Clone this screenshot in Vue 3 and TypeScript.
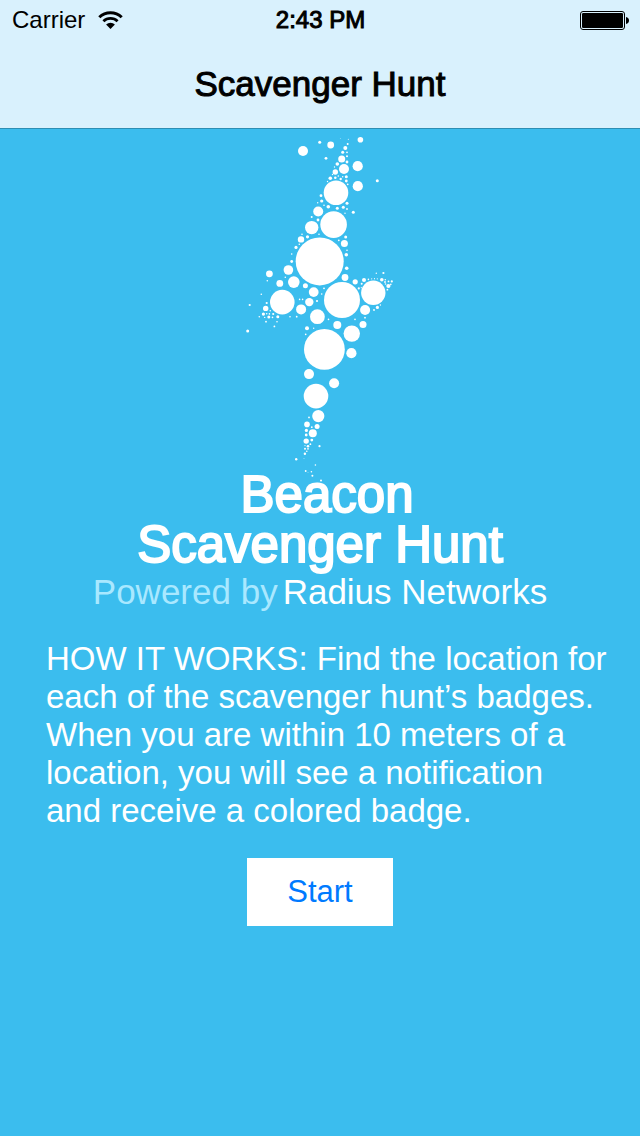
<script setup lang="ts">
type Dot = [x: number, y: number, r: number]

const dots: Dot[] = [
  // tip
  [303, 151, 5], [319.7, 142.3, 1.5], [330.7, 145, 3.4], [360.4, 139.8, 2.8], [345.3, 148, 2],
  [326, 158.3, 1.4], [342.7, 152.3, 1.5], [341.7, 159, 3.5], [344, 169, 5], [357.7, 166.2, 5.1],
  [357.8, 186.2, 5.1], [337.3, 164, 1.8], [335.3, 172, 2.7], [377.3, 180.7, 1.5], [330.3, 178.3, 1.8],
  [347.7, 144, 1], [348.3, 139.3, 0.5], [340.3, 138.3, 0.4], [347, 152.3, 0.9], [347, 156.3, 1],
  [347, 162, 1.4], [346.3, 176.7, 1.5], [346.3, 181, 1.4], [347.7, 184.3, 0.9], [335.3, 177.7, 1.3],
  [340.7, 179, 1.2], [338.3, 176, 0.8], [342.7, 176.7, 0.7], [332.5, 174.5, 0.7], [327.5, 181.5, 0.7],
  [334.5, 167, 0.7], [336, 192.8, 12.3], [321, 195.7, 1.4], [321.7, 201, 1.6], [317.7, 202.7, 0.7],
  [318.2, 211.5, 5], [328.3, 206.7, 1.8], [324, 205.3, 0.8], [337.3, 208.3, 1.5], [343.3, 207.3, 1.5],
  [347, 203.3, 1.5], [347, 209, 0.9], [353.3, 212.3, 1.5], [345, 213.3, 0.7], [311.7, 217, 1],
  // upper body
  [333.6, 224.6, 13.3], [311.7, 227.6, 6.7], [318, 220, 1.4], [301, 239.4, 3.2], [307.5, 236.8, 1.6],
  [302, 234.3, 0.8], [319, 234.3, 0.8], [296, 247.4, 1.6], [299.3, 244.3, 0.8], [291.7, 254, 0.8],
  [291.7, 261.5, 1.4], [319.7, 261.4, 24], [288.4, 270, 4.8], [269.4, 273.8, 3.4], [267.3, 280.7, 0.8],
  [345.7, 237, 1.5], [338.8, 240.3, 0.9], [344.4, 243.4, 3.5], [347, 250.3, 0.8], [346.3, 254.7, 1.8],
  [346.7, 268.3, 1.8], [345, 277.5, 3.4],
  // left wing
  [279.8, 283.4, 3.4], [293.8, 282.1, 5.8], [285.3, 277.3, 0.8], [305.4, 285.8, 2.5], [313.7, 292.1, 4.9],
  [324, 288.3, 0.9], [321.7, 294, 0.8], [317, 301, 1.1], [309.3, 302.1, 4.2], [301.1, 309.4, 5],
  [282.3, 302.1, 12.3], [299.6, 299.4, 0.8], [302.6, 299.4, 0.8], [261.3, 294.3, 0.8], [249.7, 305, 1.1],
  [247.7, 331, 1.5], [266.7, 303, 1.1], [265.7, 308.4, 2.7], [270.3, 310.7, 0.8], [263.4, 314.1, 1.6],
  [266.7, 313.7, 0.8], [269.4, 313.9, 0.8], [268.8, 317.1, 1.5], [273.2, 314, 1.1], [272.5, 317.4, 0.8],
  [259.3, 316.7, 0.8], [264.7, 317.4, 0.7], [277.8, 316.7, 1.5], [290, 316.7, 0.8], [296.7, 316.7, 0.9],
  [266, 321.7, 0.9], [277, 321.7, 0.8], [274.4, 326.4, 0.9],
  // right wing
  [355.2, 281.8, 2.6], [364, 280, 2], [376.3, 273.3, 0.7], [383.4, 273, 1.1], [342, 300, 18],
  [373.3, 292.8, 12.2], [381.8, 279.8, 1.8], [388.4, 286, 2.1], [391.8, 281.4, 1.1], [388.5, 281.4, 0.9],
  [385.3, 279.7, 0.8], [385, 282, 0.9], [385.5, 284, 0.8], [390.8, 284.4, 0.8], [387.4, 289.7, 0.9],
  [368.4, 279.4, 0.8], [371.7, 278.8, 0.6], [374.5, 278.7, 0.6], [377.3, 278.8, 0.6], [361.7, 283.8, 1],
  [358.8, 288.4, 1.1], [361.3, 287.7, 0.6], [365.1, 310, 5], [377.4, 307.4, 1.6], [374, 310, 0.9],
  [380.4, 305, 0.7], [365, 317.7, 0.9], [363, 324.5, 3.5], [355, 319.4, 0.8], [337.3, 325.1, 4],
  // lower body and tail
  [317.4, 316.7, 7.4], [328.5, 319.4, 0.8], [307, 328.3, 2], [313.7, 328.3, 0.7], [305.7, 334.4, 0.8],
  [351.8, 333.6, 8.2], [324.4, 349.4, 20.4], [351.4, 353.2, 5.1], [309, 374.1, 5], [334.1, 383.3, 5],
  [316, 396.1, 12.3], [318.3, 416.1, 6.1], [309, 417.4, 0.9], [307, 424.4, 2.8], [317.1, 426.5, 2.5],
  [311.8, 427.2, 0.9], [306.4, 430.4, 1.6], [312.8, 433.2, 4], [306.2, 435, 1.4], [311.8, 440.1, 1.4],
  [306.2, 441.1, 2.7], [310.4, 444.2, 0.9], [308, 446.2, 1.3], [305, 445.6, 0.6], [305, 448.8, 1],
  [308, 448.8, 0.9], [306.8, 451.2, 0.8], [304.9, 453.8, 1.2], [319.5, 446.2, 1.1], [296.2, 459.3, 1.2],
  [304, 458.5, 0.4], [315.4, 465, 0.8], [305.7, 471, 0.9], [311.4, 471.8, 0.8], [312.4, 475.8, 1],
  [308, 472.7, 0.4], [321, 480.4, 1], [294.4, 485.3, 1.6],
]
</script>

<template>
  <div class="screen">
    <header class="top">
      <div class="status">
        <div class="carrier">
          <span>Carrier</span>
          <svg class="wifi" viewBox="0 0 25 18" aria-hidden="true">
            <path d="M1.3 6.2A16 16 0 0 1 23.7 6.2" fill="none" stroke="#000" stroke-width="3" />
            <path d="M5.4 10.2A10.4 10.4 0 0 1 19.6 10.2" fill="none" stroke="#000" stroke-width="2.8" />
            <path d="M8.1 13.4A6.4 6.4 0 0 1 16.9 13.4L12.5 18Z" fill="#000" />
          </svg>
        </div>
        <time class="time">2:43 PM</time>
        <svg class="battery" viewBox="0 0 49 19" aria-hidden="true">
          <rect x="0.5" y="0.5" width="44" height="18" rx="2.5" fill="none" stroke="#000" />
          <rect x="2" y="2" width="41" height="15" rx="1.2" fill="#000" />
          <path d="M46 6Q49 6.6 49 9.5T46 13Z" fill="#000" />
        </svg>
      </div>
      <div class="nav">Scavenger Hunt</div>
    </header>

    <main class="content">
      <svg class="bolt" viewBox="240 129 160 341" aria-hidden="true">
        <circle v-for="([x, y, r], i) in dots" :key="i" :cx="x" :cy="y" :r="r" fill="#fff" />
      </svg>
      <h1 class="title">&nbsp;Beacon<br />Scavenger Hunt</h1>
      <p class="powered"><span class="by">Powered by</span><span>Radius Networks</span></p>
      <p class="how">
        HOW IT WORKS: Find the location for each of the scavenger hunt’s badges. When you are within
        10 meters of a location, you will see a notification<br />and receive a colored badge.
      </p>
      <button class="start" type="button">Start</button>
    </main>
  </div>
</template>

<style>
body {
  background: #3bbdee;
}
</style>

<style scoped>
.screen {
  min-height: 100vh;
  background: #3bbdee;
  color: #fff;
  font-family: "Liberation Sans", Arial, sans-serif;
}

.top {
  background: #d9f1fd;
  border-bottom: 1px solid #2d8eb3;
  color: #000;
}

.status {
  display: grid;
  grid-template-columns: 1fr auto 1fr;
  align-items: center;
  height: 40px;
  padding: 0 11px 0 12px;
  font-size: 24px;
  line-height: 40px;
}

.carrier {
  display: flex;
  align-items: center;
  gap: 13px;
}

.wifi {
  width: 25px;
  height: 18px;
}

.time {
  -webkit-text-stroke: 1px currentColor;
}

.battery {
  justify-self: end;
  width: 49px;
  height: 19px;
}

.nav {
  font-size: 35px;
  line-height: 88px;
  text-align: center;
  -webkit-text-stroke: 1px currentColor;
}

.content {
  display: flex;
  flex-direction: column;
  align-items: center;
}

.bolt {
  width: 160px;
  height: 341px;
  overflow: visible;
}

.title {
  margin: 0;
  font-size: 51px;
  font-weight: 400;
  line-height: 50px;
  text-align: center;
  -webkit-text-stroke: 2px currentColor;
}

.powered {
  display: flex;
  gap: 5px;
  margin: 2px 0 0;
  font-size: 35px;
  line-height: 40px;
}

.by {
  color: #a9e8ff;
}

.how {
  align-self: stretch;
  margin: 28px 0;
  padding: 0 24px 0 46px;
  font-size: 33px;
  line-height: 38px;
}

.start {
  padding: 0 40px;
  border: 0;
  border-radius: 0;
  background: #fff;
  color: #007aff;
  font-family: inherit;
  font-size: 31px;
  line-height: 68px;
}
</style>
